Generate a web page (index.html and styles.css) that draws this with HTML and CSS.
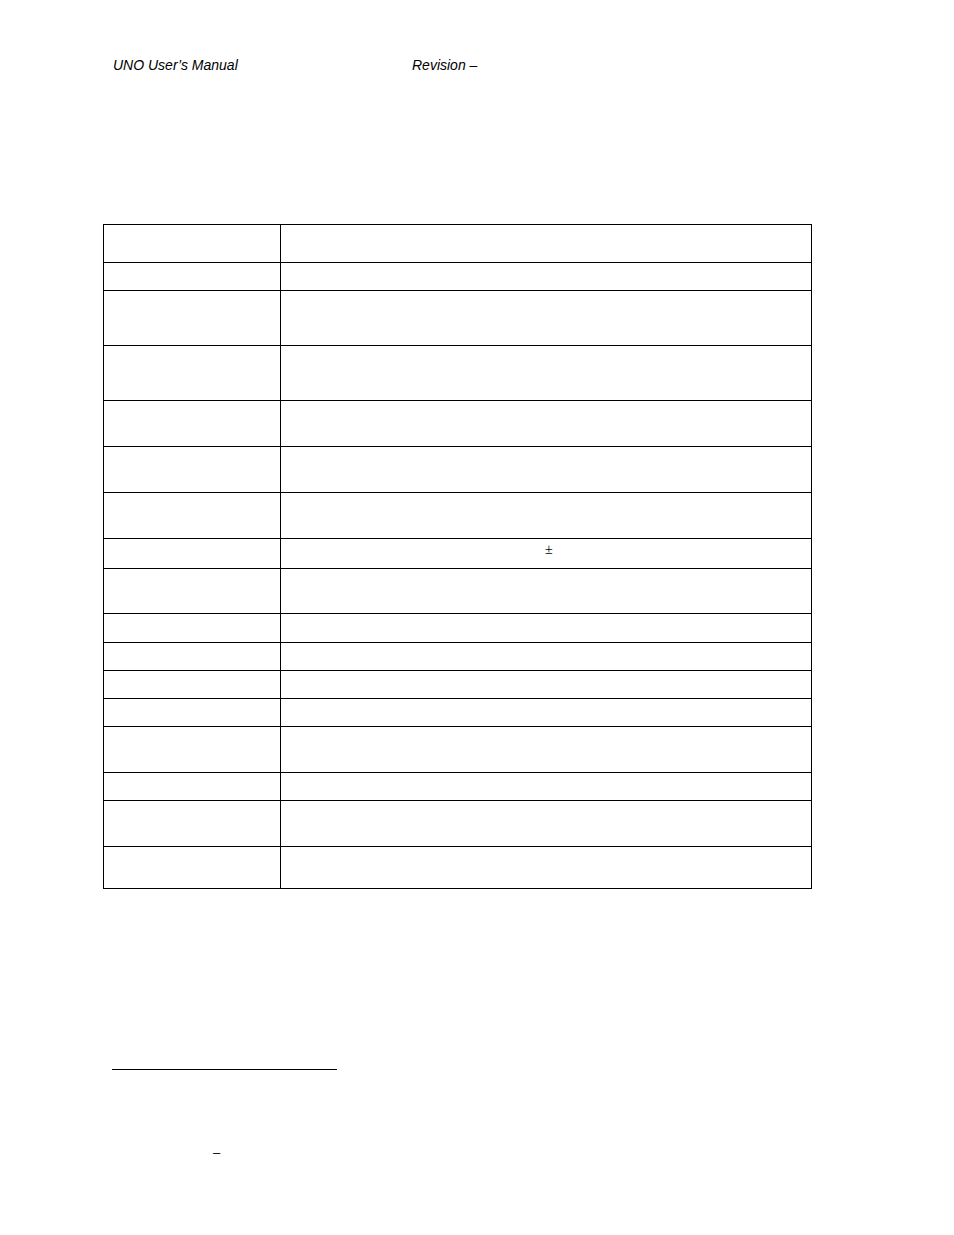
FILE: index.html
```html
<!DOCTYPE html>
<html>
<head>
<meta charset="utf-8">
<link rel="stylesheet" href="styles.css">
</head>
<body>
<div class="page">
  <header class="hdr">
    <span class="hdr-title">UNO User’s Manual</span>
    <span class="hdr-rev">Revision –</span>
  </header>

  <div class="tbl">
    <div class="row h38"><div class="c1"></div><div class="c2"></div></div>
    <div class="row h28"><div class="c1"></div><div class="c2"></div></div>
    <div class="row h55"><div class="c1"></div><div class="c2"></div></div>
    <div class="row h55"><div class="c1"></div><div class="c2"></div></div>
    <div class="row h46"><div class="c1"></div><div class="c2"></div></div>
    <div class="row h46"><div class="c1"></div><div class="c2"></div></div>
    <div class="row h46"><div class="c1"></div><div class="c2"></div></div>
    <div class="row h30"><div class="c1"></div><div class="c2"><span class="pm">±</span></div></div>
    <div class="row h45"><div class="c1"></div><div class="c2"></div></div>
    <div class="row h29"><div class="c1"></div><div class="c2"></div></div>
    <div class="row h28"><div class="c1"></div><div class="c2"></div></div>
    <div class="row h28"><div class="c1"></div><div class="c2"></div></div>
    <div class="row h28"><div class="c1"></div><div class="c2"></div></div>
    <div class="row h46"><div class="c1"></div><div class="c2"></div></div>
    <div class="row h28"><div class="c1"></div><div class="c2"></div></div>
    <div class="row h46"><div class="c1"></div><div class="c2"></div></div>
    <div class="row h42"><div class="c1"></div><div class="c2"></div></div>
  </div>

  <div class="fn-rule"></div>
  <div class="fn-text">–</div>
</div>
</body>
</html>
```

FILE: styles.css
```css
html, body {
  margin: 0;
  padding: 0;
  background: #fff;
}
body {
  font-family: "Liberation Sans", Arial, sans-serif;
  color: #000;
}
.page {
  width: 954px;
  height: 1235px;
  padding-top: 57px;
  box-sizing: border-box;
}
.hdr {
  display: flex;
  padding-left: 113px;
  font-size: 14px;
  line-height: 16px;
  font-style: italic;
}
.hdr-title {
  width: 299px;
}
.tbl {
  margin-top: 151px;
  margin-left: 103px;
  width: 709px;
  border-left: 1px solid #000;
  border-right: 1px solid #000;
  border-bottom: 1px solid #000;
  box-sizing: border-box;
}
.row {
  display: grid;
  grid-template-columns: 177px 1fr;
  border-top: 1px solid #000;
  box-sizing: border-box;
}
.c1 {
  border-right: 1px solid #000;
}
.pm {
  display: block;
  padding-left: 264px;
  padding-top: 4px;
  font-family: "Liberation Serif", "Times New Roman", serif;
  font-size: 14px;
  line-height: 14px;
}
.h28 { height: 28px; }
.h29 { height: 29px; }
.h30 { height: 30px; }
.h38 { height: 38px; }
.h42 { height: 42px; }
.h45 { height: 45px; }
.h46 { height: 46px; }
.h55 { height: 55px; }
.fn-rule {
  margin-top: 180px;
  margin-left: 112px;
  width: 225px;
  border-top: 1px solid #000;
}
.fn-text {
  margin-top: 75px;
  padding-left: 213px;
  font-size: 13px;
  line-height: 16px;
}
```
